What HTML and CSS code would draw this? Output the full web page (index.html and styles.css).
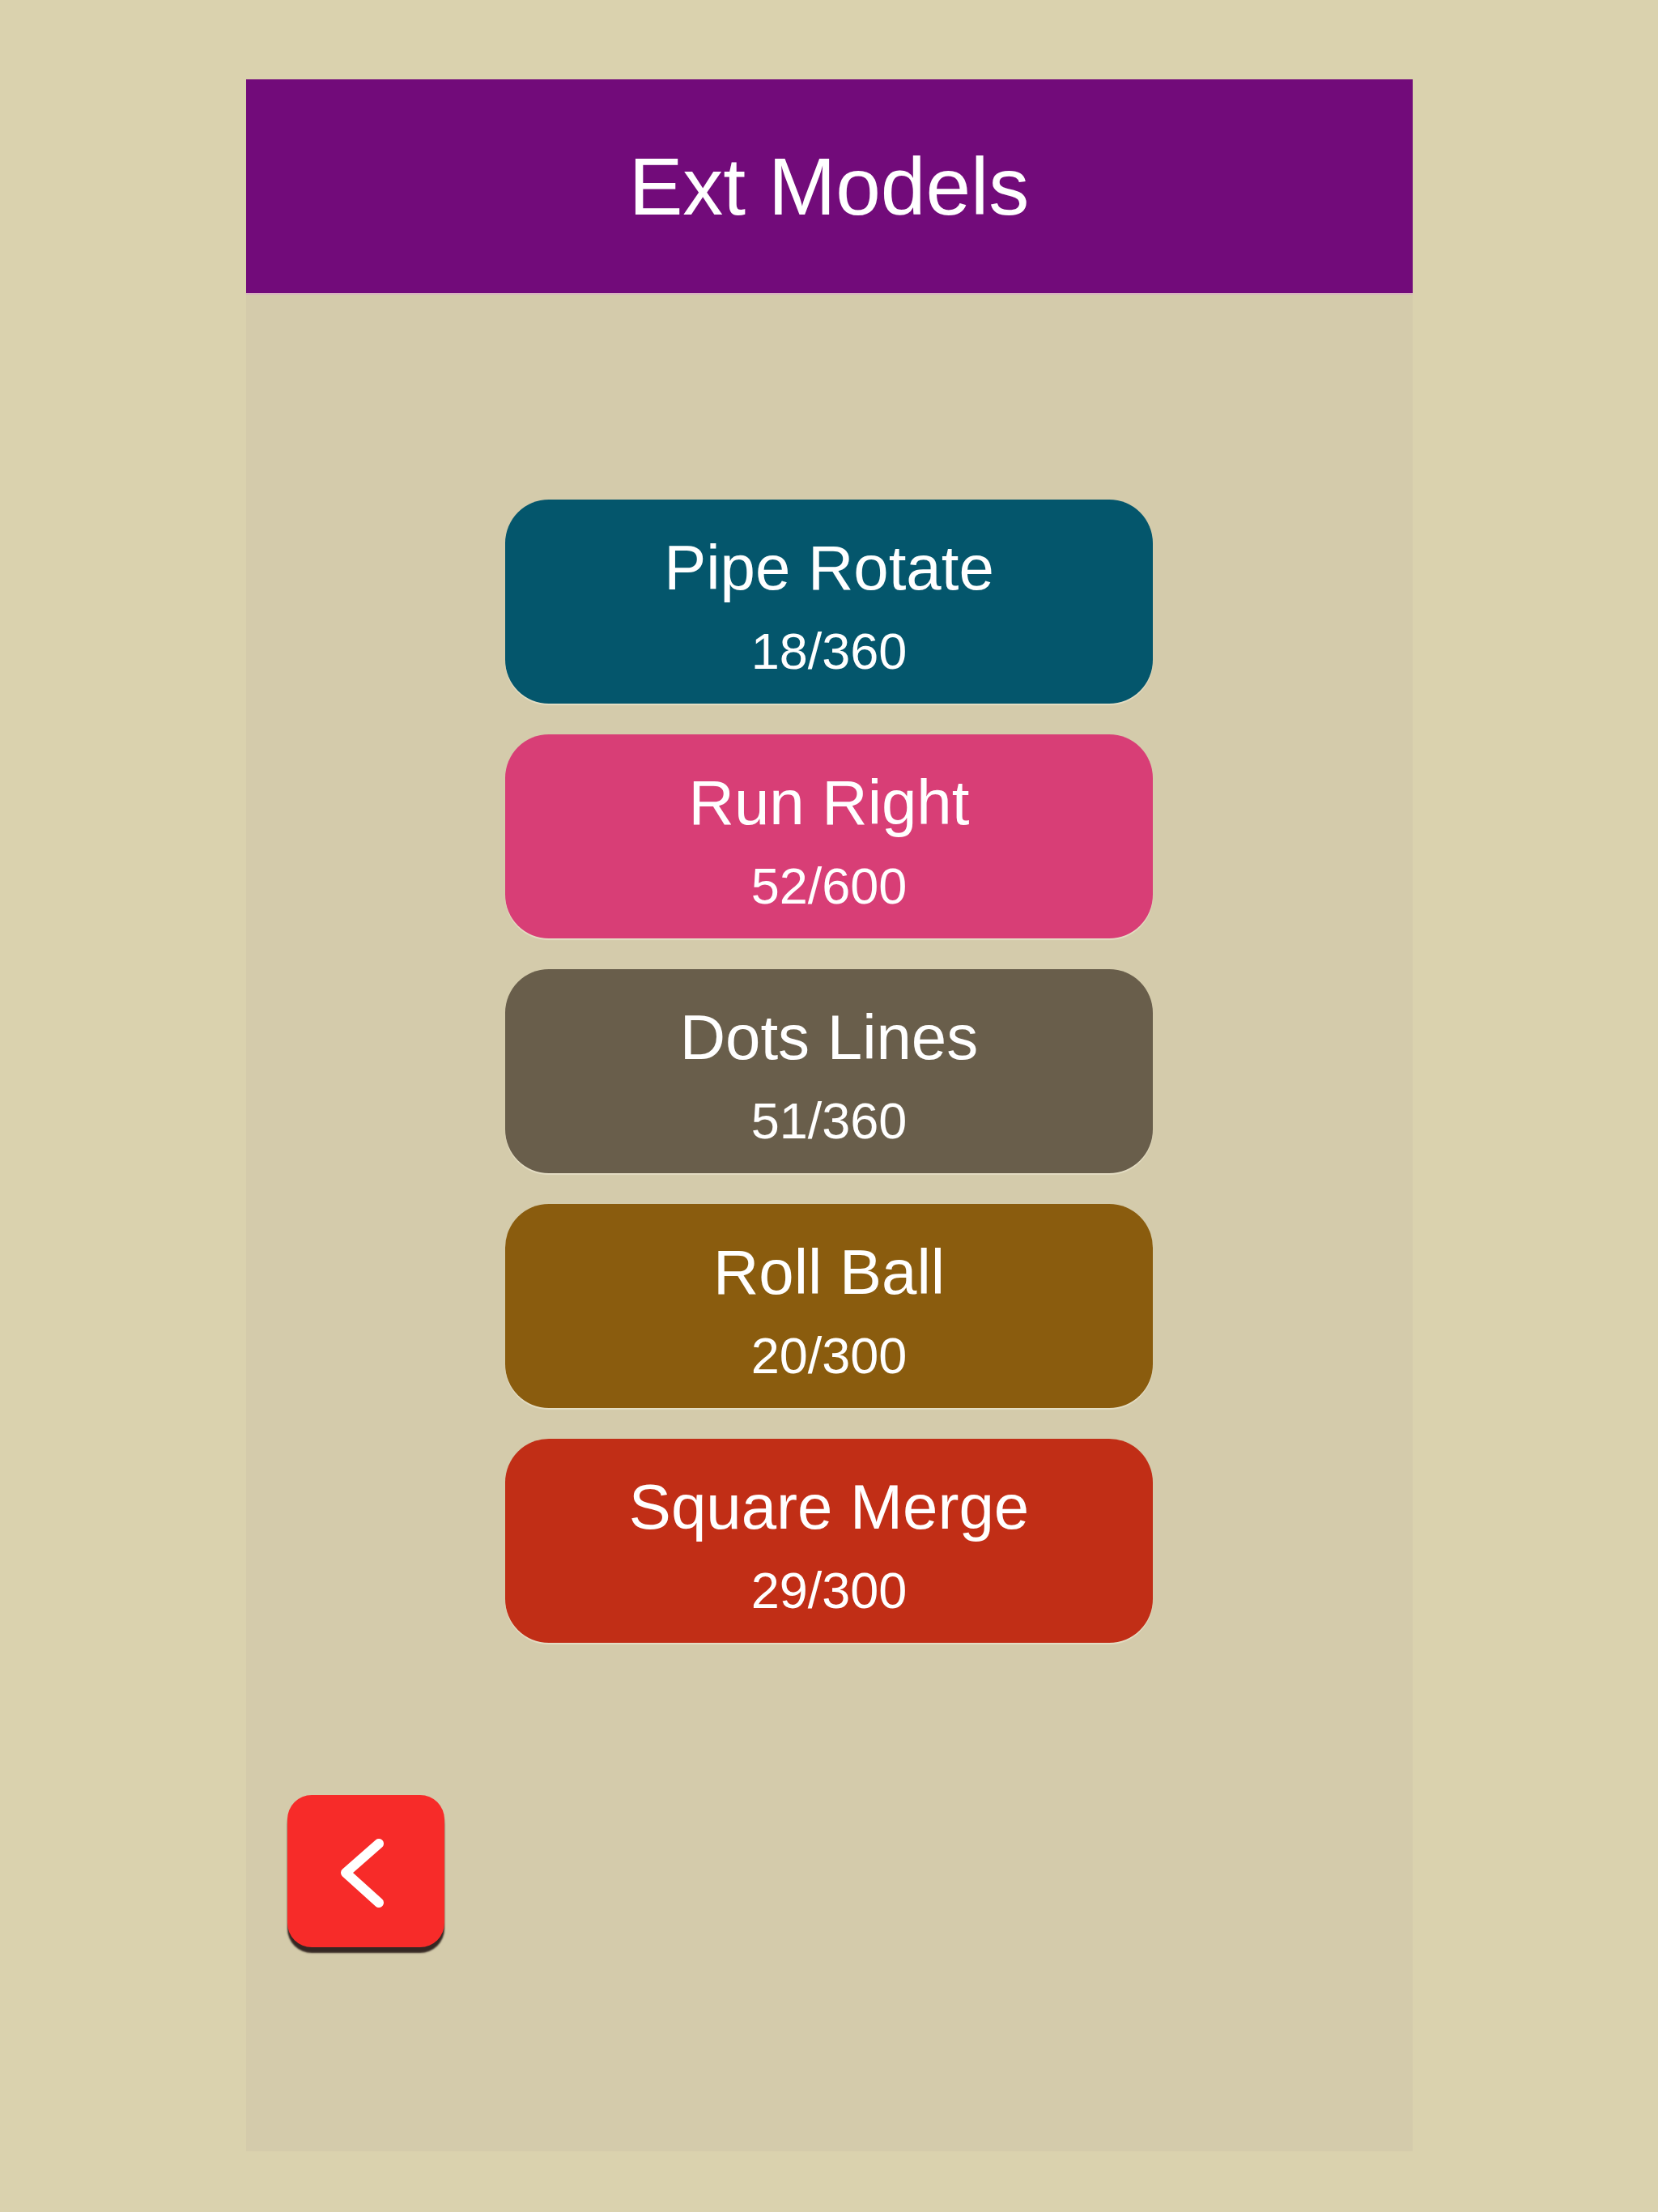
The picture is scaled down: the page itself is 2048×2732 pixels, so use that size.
FILE: index.html
```html
<!DOCTYPE html>
<html lang="en">
<head>
  <meta charset="UTF-8" />
  <meta name="viewport" content="width=device-width, initial-scale=1.0" />
  <title>Ext Models</title>
  <link rel="stylesheet" href="styles.css">
</head>
<body>
  <div class="screen">
    <header class="top-bar">
      <h1>Ext Models</h1>
    </header>

    <div class="model-list">
      <a href="#" class="model-btn teal">
        <span class="model-name">Pipe Rotate</span>
        <span class="model-count">18/360</span>
      </a>
      <a href="#" class="model-btn pink">
        <span class="model-name">Run Right</span>
        <span class="model-count">52/600</span>
      </a>
      <a href="#" class="model-btn grey">
        <span class="model-name">Dots Lines</span>
        <span class="model-count">51/360</span>
      </a>
      <a href="#" class="model-btn brown">
        <span class="model-name">Roll Ball</span>
        <span class="model-count">20/300</span>
      </a>
      <a href="#" class="model-btn red">
        <span class="model-name">Square Merge</span>
        <span class="model-count">29/300</span>
      </a>
    </div>

    <a href="#" class="back-btn" aria-label="Back">
      <svg width="194" height="188" viewBox="0 0 194 188">
        <polyline points="113,60 72,96 113,133" fill="none" stroke="#fff" stroke-width="12" stroke-linecap="round" stroke-linejoin="round" />
      </svg>
    </a>
  </div>
</body>
</html>
```

FILE: styles.css
```css
* { box-sizing: border-box; margin: 0; padding: 0; }
body { font-family: "Liberation Sans", Arial, sans-serif; background: #dad2ae; padding-top: 98px; }

.screen { width: 1441px; height: 2559px; margin: 0 auto; background: #d4cbab; }

.top-bar { height: 264px; background: #720b7a; display: flex; align-items: center; justify-content: center; box-shadow: 0 2px 0 #d8b4bf; }
.top-bar h1 { color: #fff; font-size: 100px; font-weight: normal; }

.model-list { margin-top: 255px; display: flex; flex-direction: column; align-items: center; gap: 38px; }
.model-btn { width: 800px; height: 252px; border-radius: 54px; padding-top: 39px; display: flex; flex-direction: column; align-items: center; color: #fff; text-decoration: none; box-shadow: 0 2px 1px rgba(240,235,215,0.6); }
.model-name { font-size: 78px; margin-bottom: 21px; }
.model-count { font-size: 63px; }

.teal { background: #04566c; }
.pink { background: #d83e76; }
.grey { background: #695e4b; }
.brown { background: #8a5c0e; }
.red { background: #c12e16; }

.back-btn { display: block; width: 194px; height: 188px; margin: 188px 0 0 51px; background: #f72b29; border-radius: 30px; box-shadow: 0 7px 2px rgba(25,10,10,0.85); }
.back-btn svg { display: block; }
```
